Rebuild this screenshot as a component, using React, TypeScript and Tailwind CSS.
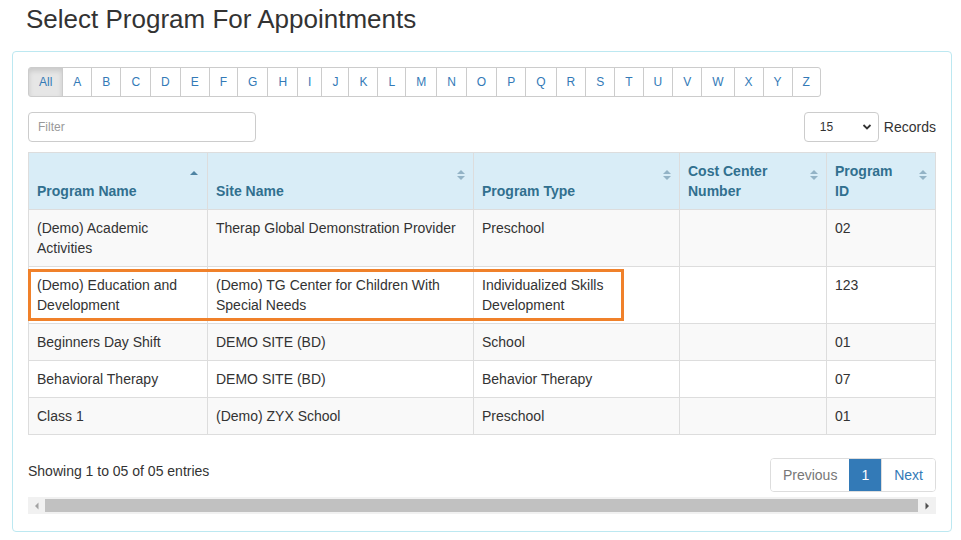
import React from "react";

const letters = ["All","A","B","C","D","E","F","G","H","I","J","K","L","M","N","O","P","Q","R","S","T","U","V","W","X","Y","Z"];

const rows = [
  ["(Demo) Academic Activities", "Therap Global Demonstration Provider", "Preschool", "", "02"],
  ["(Demo) Education and Development", "(Demo) TG Center for Children With Special Needs", "Individualized Skills Development", "", "123"],
  ["Beginners Day Shift", "DEMO SITE (BD)", "School", "", "01"],
  ["Behavioral Therapy", "DEMO SITE (BD)", "Behavior Therapy", "", "07"],
  ["Class 1", "(Demo) ZYX School", "Preschool", "", "01"],
];

const headers = [
  { label: "Program Name", w: "w-[179px]", active: true },
  { label: "Site Name", w: "w-[266px]", active: false },
  { label: "Program Type", w: "w-[206px]", active: false },
  { label: "Cost Center Number", w: "w-[147px]", active: false },
  { label: "Program ID", w: "w-[109px]", active: false },
];

function SortIcon({ active }: { active: boolean }) {
  if (active) {
    return (
      <svg width="10" height="12" viewBox="0 0 10 12" className="absolute right-[8px] top-[16px]">
        <path d="M1 6 L5 2 L9 6 Z" fill="#4f84a3" />
      </svg>
    );
  }
  return (
    <svg width="10" height="12" viewBox="0 0 10 12" className="absolute right-[7px] top-[16px]">
      <path d="M1 5 L5 1 L9 5 Z" fill="#93b3c6" />
      <path d="M1 7 L5 11 L9 7 Z" fill="#93b3c6" />
    </svg>
  );
}

export default function App() {
  return (
    <div className="w-[961px] h-[540px] bg-white text-[#333] text-[14px] leading-[20px] overflow-hidden" style={{ fontFamily: '"Liberation Sans", Arial, sans-serif' }}>
      <h3 className="pl-[26px] pt-[4px] text-[26px] leading-[30px] font-normal text-[#333]">Select Program For Appointments</h3>
      <div className="ml-[12px] mt-[17px] w-[940px] h-[481px] border border-[#bce8f1] rounded-[4px] p-[15px]">
        {/* alphabet */}
        <div className="flex">
          {letters.map((l, i) => (
            <div
              key={l}
              className={
                "h-[30px] px-[10px] flex items-center border border-[#ccc] text-[12px] leading-[18px] " +
                (i === 0
                  ? "bg-[#e6e6e6] text-[#337ab7] rounded-l-[3px] shadow-[inset_0_3px_5px_rgba(0,0,0,0.125)]"
                  : "bg-white text-[#337ab7] -ml-px") +
                (i === letters.length - 1 ? " rounded-r-[3px]" : "")
              }
            >
              {l}
            </div>
          ))}
        </div>
        {/* filter row */}
        <div className="mt-[15px] flex items-center justify-between">
          <div className="w-[228px] h-[30px] border border-[#ccc] rounded-[4px] px-[9px] flex items-center text-[12px] text-[#999]">
            Filter
          </div>
          <div className="flex items-center">
            <div className="w-[75px] h-[30px] border border-[#ccc] rounded-[4px] flex items-center justify-between pl-[15px] pr-[6px] text-[12px] text-[#333]">
              <span>15</span>
              <svg width="10" height="8" viewBox="0 0 10 8">
                <path d="M1.5 2 L5 5.5 L8.5 2" stroke="#333" strokeWidth="1.8" fill="none" />
              </svg>
            </div>
            <span className="ml-[5px] text-[14px] text-[#333]">Records</span>
          </div>
        </div>
        {/* table */}
        <div className="relative mt-[10px]">
          <table className="table-fixed border-collapse w-[907px]">
            <thead>
              <tr className="bg-[#d9edf7] text-[#31708f]">
                {headers.map((h) => (
                  <th
                    key={h.label}
                    className={h.w + " relative border border-[#ddd] align-bottom text-left font-bold px-[8px] pt-[8px] pb-[8px] pr-[28px] h-[57px]"}
                  >
                    {h.label}
                    <SortIcon active={h.active} />
                  </th>
                ))}
              </tr>
            </thead>
            <tbody>
              {rows.map((r, i) => (
                <tr key={i} className={i % 2 === 0 ? "bg-[#f9f9f9]" : "bg-white"}>
                  {r.map((c, j) => (
                    <td key={j} className={"border border-[#ddd] align-top px-[8px] py-[8px] " + (j === 0 ? "pr-[20px]" : "")}>
                      {c}
                    </td>
                  ))}
                </tr>
              ))}
            </tbody>
          </table>
          <div className="absolute left-0 top-[117px] w-[596px] h-[52px] border-[3px] border-[#f0812a] pointer-events-none" />
        </div>
        {/* footer */}
        <div className="mt-[20px] flex justify-between items-start">
          <div className="pt-[6px]">Showing 1 to 05 of 05 entries</div>
          <div className="mt-[3px] flex h-[34px] rounded-[4px] border border-[#ddd] overflow-hidden">
            <div className="px-[12px] flex items-center text-[#777] bg-white">Previous</div>
            <div className="px-[12px] flex items-center text-white bg-[#337ab7]">1</div>
            <div className="px-[12px] flex items-center text-[#337ab7] bg-white border-l border-[#ddd]">Next</div>
          </div>
        </div>
        {/* scrollbar */}
        <div className="mt-[5px] w-[908px] h-[17px] bg-[#f1f1f1] flex items-center">
          <div className="w-[17px] h-full flex items-center justify-center">
            <svg width="6" height="8" viewBox="0 0 6 8"><path d="M4.5 0.5 L1 4 L4.5 7.5 Z" fill="#a3a3a3" /></svg>
          </div>
          <div className="flex-1 h-[13px] bg-[#c1c1c1]" />
          <div className="w-[18px] h-full flex items-center justify-center">
            <svg width="6" height="8" viewBox="0 0 6 8"><path d="M1.5 0.5 L5 4 L1.5 7.5 Z" fill="#505050" /></svg>
          </div>
        </div>
      </div>
    </div>
  );
}
